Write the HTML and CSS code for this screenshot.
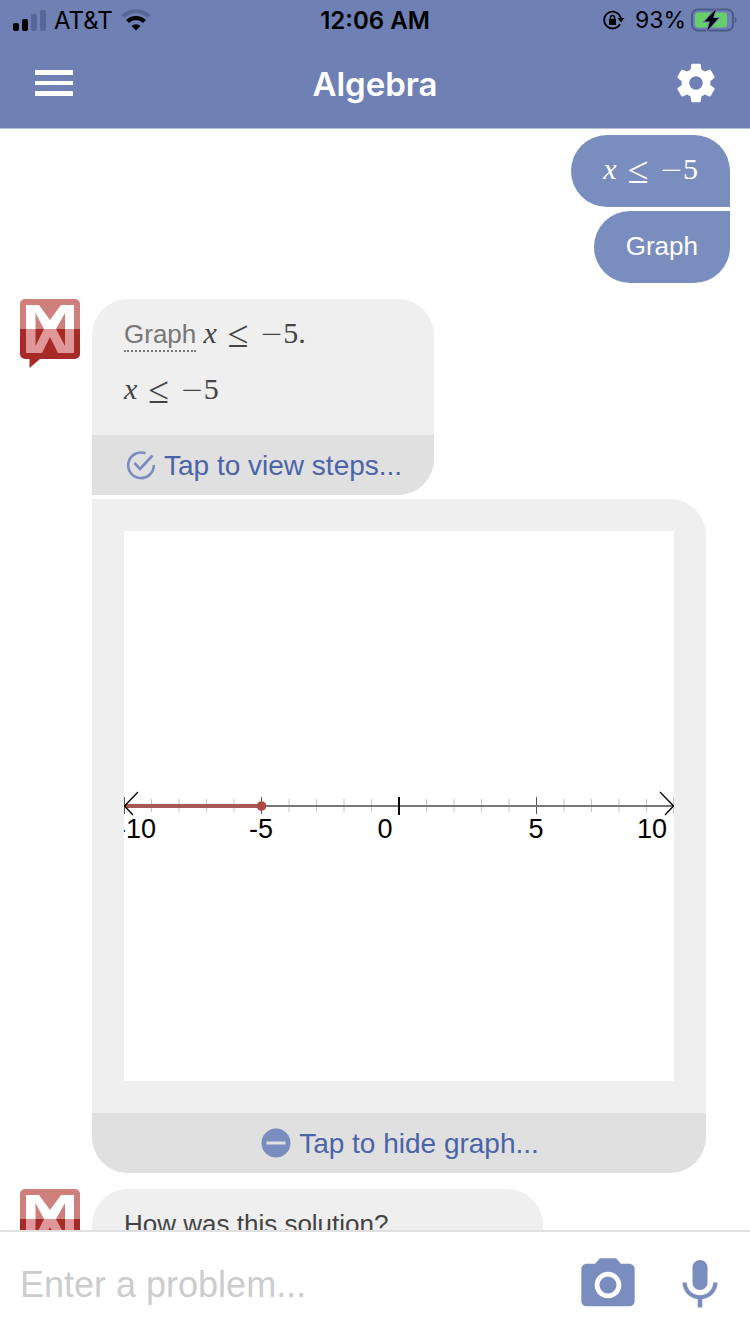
FILE: index.html
```html
<!DOCTYPE html>
<html lang="en">
<head>
  <meta charset="utf-8">
  <meta name="viewport" content="width=device-width, initial-scale=1">
  <title>Algebra</title>
  <link rel="stylesheet" href="styles.css">
</head>
<body>
  <!-- shared logo -->
  <svg class="defs" width="0" height="0" aria-hidden="true">
    <symbol id="logo" viewBox="0 0 60 70">
      <path fill="#cf807c" d="M0 30V5a5 5 0 0 1 5-5h50a5 5 0 0 1 5 5v25z"/>
      <path fill="#a82a26" d="M0 30h60v25a5 5 0 0 1-5 5H20L9.500 69V60H5a5 5 0 0 1-5-5z"/>
      <path fill="#fff" d="M6 30V6h13l11 15L41 6h13v24h-9V14L36 30H24L15.500 14v16z"/>
      <path fill="#df979a" d="M6 30h9.500v17L24 30h12l9 17V30h9v24H38l-8-16-8 16H6z"/>
    </symbol>
  </svg>

  <!-- HEADER -->
  <header class="header">
    <div class="status">
      <div class="status-left">
        <svg width="34" height="22" viewBox="0 0 34 22" aria-hidden="true">
          <rect x="1" y="14" width="6" height="8" rx="2"/>
          <rect x="10" y="10" width="6" height="12" rx="2"/>
          <rect x="19" y="5" width="6" height="17" rx="2" fill="#566796"/>
          <rect x="28" y="1" width="6" height="21" rx="2" fill="#566796"/>
        </svg>
        <span>AT&amp;T</span>
        <svg width="30" height="22" viewBox="0 0 30 22" fill="none" aria-hidden="true">
          <path d="M2 7.500a18.500 18.500 0 0 1 26 0" stroke="#566796" stroke-width="4"/>
          <path d="M6.500 12.500a12 12 0 0 1 17 0" stroke="#000" stroke-width="4"/>
          <path d="M10.500 17a6.500 6.500 0 0 1 9 0L15 21.500z" fill="#000"/>
        </svg>
      </div>
      <span class="clock">12:06 AM</span>
      <div class="status-right">
        <svg width="22" height="20" viewBox="0 0 22 20" aria-hidden="true">
          <path d="M17 14A8.400 8.400 0 1 1 17.900 9" fill="none" stroke="#000" stroke-width="1.800"/>
          <path d="M14.500 8H21.500L18 12.500z"/>
          <path d="M6 9h7v6H6z"/>
          <path d="M7.500 9.500V7.500a2 2 0 0 1 4 0v2" fill="none" stroke="#000" stroke-width="1.500"/>
        </svg>
        <span class="percent">93%</span>
        <svg width="48" height="24" viewBox="0 0 48 24" aria-hidden="true">
          <rect x="2" y="1.500" width="41" height="21" rx="6" fill="none" stroke="#4c5a86" stroke-width="2"/>
          <path d="M45 8.500q3 3.500 0 7z" fill="#4c5a86"/>
          <rect x="5" y="4.500" width="32" height="15" rx="3" fill="#66cf6c"/>
          <path d="M26 1L14.500 13.500H20L17 23 28.500 10H23z" stroke="#6f80b4" stroke-width="2" paint-order="stroke"/>
        </svg>
      </div>
    </div>
    <nav class="navbar">
      <button class="icon-btn" aria-label="Menu">
        <svg width="48" height="48" viewBox="0 0 48 48" fill="#fff"><path d="M5 10h38v5H5zM5 21h38v4H5zM5 31h38v5H5z"/></svg>
      </button>
      <h1 class="title">Algebra</h1>
      <button class="icon-btn" aria-label="Settings">
        <svg width="48" height="48" viewBox="-.5 0 25 25" fill="#fff"><path d="M19.430 12.980c.04-.32.07-.64.07-.98s-.03-.66-.07-.98l2.110-1.650c.19-.15.24-.42.12-.64l-2-3.460c-.12-.22-.39-.3-.61-.22l-2.490 1c-.52-.4-1.080-.73-1.690-.98l-.38-2.650C14.460 2.180 14.250 2 14 2h-4c-.25 0-.46.18-.49.42l-.38 2.650c-.61.25-1.170.59-1.690.98l-2.490-1c-.23-.09-.49 0-.61.22l-2 3.460c-.13.22-.07.49.12.64l2.110 1.650c-.04.32-.07.65-.07.98s.03.66.07.98l-2.110 1.650c-.19.15-.24.42-.12.64l2 3.460c.12.22.39.3.61.22l2.490-1c.52.4 1.080.73 1.690.98l.38 2.650c.03.24.24.42.49.42h4c.25 0 .46-.18.49-.42l.38-2.650c.61-.25 1.170-.59 1.690-.98l2.490 1c.23.09.49 0 .61-.22l2-3.460c.12-.22.07-.49-.12-.64l-2.110-1.650zM12 15.500c-1.930 0-3.500-1.570-3.500-3.500s1.570-3.500 3.500-3.500 3.500 1.570 3.500 3.500-1.570 3.500-3.500 3.500z"/></svg>
      </button>
    </nav>
  </header>

  <!-- CONVERSATION -->
  <main class="chat">
    <div class="sent">
      <div class="bubble bubble-sent first">
        <span class="math"><i>x</i><span class="rel">≤</span><span><span class="minus">−</span>5</span></span>
      </div>
      <div class="bubble bubble-sent last">Graph</div>
    </div>

    <div class="received">
      <svg class="avatar" role="img" aria-label="Mathway"><use href="#logo"/></svg>
      <div class="messages">
        <div class="bubble bubble-received first">
          <div class="bubble-text">
            <p><span class="term">Graph</span> <span class="math"><i>x</i><span class="rel">≤</span><span><span class="minus">−</span>5.</span></span></p>
            <p><span class="math"><i>x</i><span class="rel">≤</span><span><span class="minus">−</span>5</span></span></p>
          </div>
          <button class="action">
            <svg width="32" height="32" viewBox="0 0 32 32" fill="none" stroke="#7a8dbf" stroke-width="2.600" aria-hidden="true">
              <path d="M21.500 3.300A12.800 12.800 0 1 0 29.800 15"/>
              <path d="M10.500 13l5.500 6L28.500 5.500"/>
            </svg>
            <span>Tap to view steps...</span>
          </button>
        </div>

        <div class="bubble bubble-received last">
          <div class="graph">
            <svg viewBox="0 0 550 550" role="img" aria-label="Number line">
              <path d="M27.500 268v13M55 268v13M82.500 268v13M110 268v13M165 268v13M192.500 268v13M220 268v13M247.500 268v13M302.500 268v13M330 268v13M357.500 268v13M385 268v13M440 268v13M467.500 268v13M495 268v13M522.500 268v13M549.500 266v17" stroke="#c4c4c4"/>
              <path d="M.5 266v17M137.500 266v17M412.500 266v17" stroke="#555"/>
              <path d="M0 275h550" stroke="#777" stroke-width="2"/>
              <path d="M0 275h138" stroke="#a85855" stroke-width="4"/>
              <circle cx="137.500" cy="275" r="4.800" fill="#b04a48"/>
              <path d="M275 266v18" stroke="#000" stroke-width="2"/>
              <path d="M14 261L.5 275l8.500 9M536 261l13.500 14-8.500 9" fill="none" stroke="#000" stroke-width="1.300"/>
              <g class="labels">
                <text x="32" y="307" text-anchor="end">-10</text>
                <text x="137" y="307" text-anchor="middle">-5</text>
                <text x="261" y="307" text-anchor="middle">0</text>
                <text x="412" y="307" text-anchor="middle">5</text>
                <text x="528" y="307" text-anchor="middle">10</text>
              </g>
            </svg>
          </div>
          <button class="action">
            <svg width="32" height="32" viewBox="0 0 32 32" aria-hidden="true">
              <circle cx="17" cy="15" r="14.500" fill="#7a8dbf"/>
              <path d="M7.500 13.500h19v3h-19z" fill="#e0e0e0"/>
            </svg>
            <span>Tap to hide graph...</span>
          </button>
        </div>
      </div>
    </div>

    <div class="received">
      <svg class="avatar" role="img" aria-label="Mathway"><use href="#logo"/></svg>
      <div class="messages">
        <div class="bubble bubble-received first feedback">
          <div class="bubble-text"><p>How was this solution?</p></div>
        </div>
      </div>
    </div>
  </main>

  <!-- INPUT BAR -->
  <form class="composer">
    <input class="problem" type="text" placeholder="Enter a problem..." aria-label="Enter a problem">
    <button class="icon-btn" type="button" aria-label="Camera">
      <svg width="64" height="64" viewBox="0 0 24 24" fill="#7a8dbf"><circle cx="12" cy="12" r="3.200"/><path d="M9 2L7.170 4H4c-1.100 0-2 .9-2 2v12c0 1.100.9 2 2 2h16c1.100 0 2-.9 2-2V6c0-1.100-.9-2-2-2h-3.170L15 2H9zm3 15c-2.760 0-5-2.240-5-5s2.240-5 5-5 5 2.240 5 5-2.240 5-5 5z"/></svg>
    </button>
    <button class="icon-btn" type="button" aria-label="Voice">
      <svg width="60" height="60" viewBox="0 0 24 24" fill="#7a8dbf"><path d="M12 14c1.660 0 3-1.340 3-3V5c0-1.660-1.340-3-3-3S9 3.340 9 5v6c0 1.660 1.340 3 3 3zm5.300-3c0 3-2.540 5.100-5.300 5.100S6.700 14 6.700 11H5c0 3.410 2.720 6.230 6.100 6.720V21h1.800v-3.280c3.380-.48 6.100-3.300 6.100-6.720h-1.700z"/></svg>
    </button>
  </form>
</body>
</html>
```

FILE: styles.css
```css
/* --- Layout & Basics --- */
*{box-sizing:border-box}
body{margin:0;height:100vh;display:flex;flex-direction:column;background:#fff;color:#444;font-family:"Liberation Sans",Arial,sans-serif;font-size:26px}
button{margin:0;padding:0;border:0;background:none;font:inherit;color:inherit;cursor:pointer}
svg{display:block;flex:none}
p{margin:0}
.defs{position:absolute}
.icon-btn{display:flex;flex:none}

/* --- Header --- */
.header{flex:none;background:#6f80b4;border-bottom:1px solid #b4bcd6;font-family:Inter,sans-serif}
.status{display:grid;grid-template-columns:1fr auto 1fr;align-items:center;height:40px;padding:0 12px;color:#000;font-size:24px}
.status-left,.status-right{display:flex;align-items:center;gap:8px}
.status-right{justify-content:flex-end;gap:4px}
.percent{margin-left:6px;font-size:23px}
.clock{font-weight:600}
.navbar{display:flex;align-items:center;justify-content:space-between;height:88px;padding:0 30px}
.title{margin:0;color:#fff;font-size:33px;font-weight:600}

/* --- Conversation --- */
.chat{flex:1;min-height:0;overflow:hidden;display:flex;flex-direction:column;gap:16px;padding:6px 20px 0}
.sent{flex:none;display:flex;flex-direction:column;align-items:flex-end;gap:4px}
.received{flex:none;display:flex;align-items:flex-start;gap:12px}
.avatar{width:60px;height:70px}
.messages{display:flex;flex-direction:column;align-items:flex-start;gap:4px}

/* --- Bubbles --- */
.bubble{overflow:hidden;border-radius:36px}
.bubble.first{border-bottom-left-radius:0}
.bubble.last{border-top-left-radius:0}
.bubble-sent{height:72px;padding:0 32px;background:#7a8dbf;color:#fff;line-height:70px}
.bubble-sent.first{border-radius:36px 36px 0 36px}
.bubble-sent.last{border-radius:36px 0 36px 36px}
.bubble-received{background:#efefef}
.bubble-text{padding:7px 32px 17px;line-height:56px}
.feedback{min-width:451px}
.term{display:inline-block;line-height:32px;color:#777;border-bottom:2px dotted #777}
.action{display:flex;align-items:center;justify-content:center;gap:8px;width:100%;height:60px;padding:2px 32px 0;background:#e0e0e0;color:#4b64a8;font-size:28px}

/* --- Math --- */
.math{display:inline-flex;align-items:center;gap:11px;line-height:32px;font-family:"Liberation Serif","Times New Roman",serif;font-size:30px}
.rel{padding-top:2px;font-size:38px}
.minus{font-family:"DejaVu Sans",sans-serif;font-size:28px;font-weight:200;line-height:0}

/* --- Graph --- */
.graph{padding:32px}
.graph svg{width:550px;max-width:100%;background:#fff}
.labels{font-size:27px;fill:#000}

/* --- Input bar --- */
.composer{flex:none;display:flex;align-items:center;gap:30px;height:104px;padding:4px 20px 0;border-top:2px solid #e0e0e0;background:#fff}
.problem{flex:1;min-width:0;padding:0;border:0;outline:0;background:none;color:#444;font:36px "Liberation Sans",Arial,sans-serif}
.problem::placeholder{color:#ccc;opacity:1}
```
